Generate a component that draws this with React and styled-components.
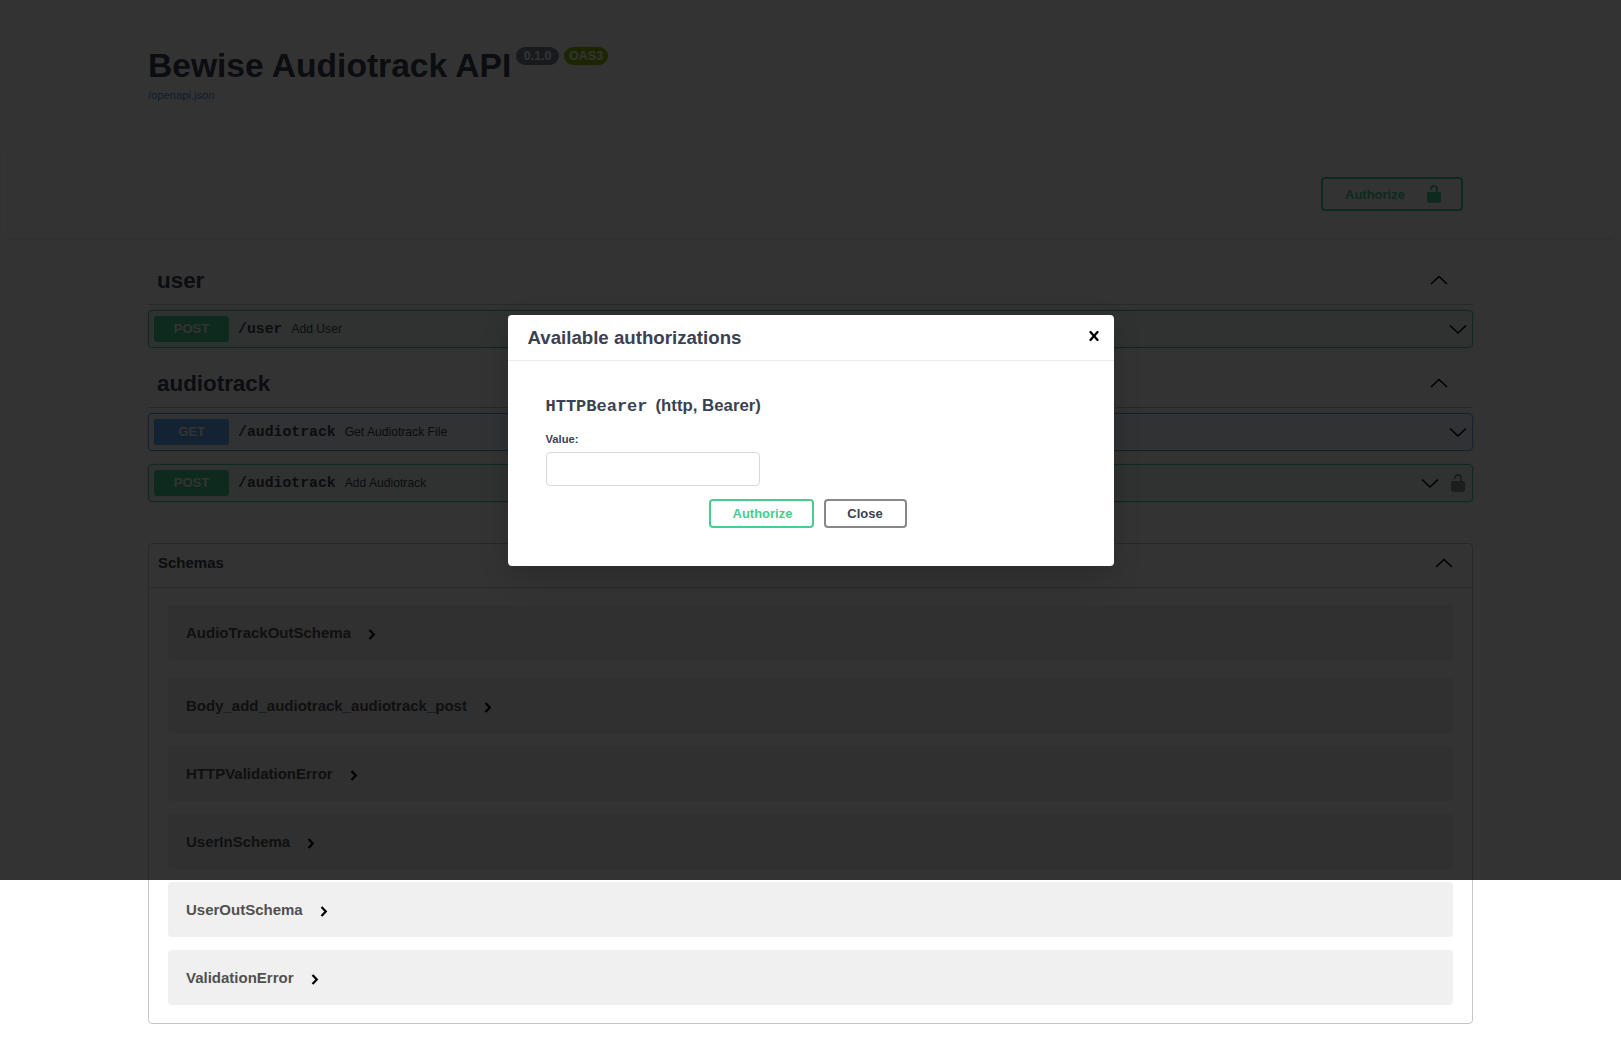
import React from 'react';
import styled, { createGlobalStyle } from 'styled-components';

const GlobalStyle = createGlobalStyle`
  body {
    margin: 0;
    background: #fff;
    font-family: "Liberation Sans", Arial, sans-serif;
    color: #3b4151;
  }
`;

const methodColors = {
  post: { main: '#49cc90', tint: 'rgba(73, 204, 144, 0.1)' },
  get: { main: '#61affe', tint: 'rgba(97, 175, 254, 0.1)' },
};

const Page = styled.div`
  position: relative;
  height: 1052px;
  overflow: hidden;
`;

const Info = styled.div`
  padding: 45px 148px 0;
  height: 147px;
  box-sizing: border-box;
`;

const TitleRow = styled.div`
  display: flex;
  align-items: flex-start;
`;

const Title = styled.h2`
  margin: 0;
  font-size: 33.6px;
  line-height: 41px;
  font-weight: 700;
`;

const Badge = styled.span`
  margin: 2px 0 0 5px;
  height: 18px;
  padding: 0 ${(p) => p.$pad}px;
  border-radius: 57px;
  background: ${(p) => p.$bg};
  color: #fff;
  font-size: 12.5px;
  font-weight: 700;
  line-height: 18px;
`;

const SpecLink = styled.a`
  display: block;
  margin-top: 2px;
  font-size: 11.2px;
  line-height: 14px;
  color: #4990e2;
`;

const SchemeBar = styled.div`
  display: flex;
  justify-content: flex-end;
  margin: 0 8px;
  padding: 30px 150px 27px 0;
  box-shadow: 0 1px 2px 0 rgba(0, 0, 0, 0.15);
`;

const AuthorizeButton = styled.button`
  display: flex;
  align-items: center;
  justify-content: space-between;
  box-sizing: border-box;
  width: 142px;
  height: 34px;
  padding: 0 17px 0 22px;
  background: transparent;
  border: 2px solid #49cc90;
  border-radius: 4px;
  color: #49cc90;
  font-family: inherit;
  font-size: 13px;
  font-weight: 700;
`;

const Content = styled.div`
  padding: 20px 148px 0;
`;

const Section = styled.section`
  margin-bottom: 13px;
`;

const TagHeader = styled.div`
  display: flex;
  align-items: center;
  justify-content: space-between;
  box-sizing: border-box;
  height: 47px;
  padding: 0 24px 1px 9px;
  margin-bottom: 5px;
  border-bottom: 1px solid rgba(59, 65, 81, 0.3);

  svg {
    margin-bottom: 2px;
  }
`;

const TagName = styled.h3`
  margin: 0;
  font-size: 22.4px;
  font-weight: 700;
`;

const Operation = styled.div`
  display: flex;
  align-items: center;
  box-sizing: border-box;
  height: 38px;
  margin-bottom: 13px;
  padding: 0 5px;
  background: ${(p) => methodColors[p.$method].tint};
  border: 1px solid ${(p) => methodColors[p.$method].main};
  border-radius: 4px;
  box-shadow: 0 0 3px rgba(0, 0, 0, 0.19);
  &:last-child {
    margin-bottom: 0;
  }
`;

const Method = styled.span`
  width: 75px;
  height: 26px;
  border-radius: 3px;
  background: ${(p) => methodColors[p.$method].main};
  color: #fff;
  font-size: 13px;
  font-weight: 700;
  line-height: 26px;
  text-align: center;
  text-shadow: 0 1px 0 rgba(0, 0, 0, 0.1);
`;

const Path = styled.span`
  margin-left: 9px;
  font-family: "Liberation Mono", monospace;
  font-size: 14.8px;
  font-weight: 700;
`;

const Summary = styled.span`
  flex: 1;
  margin-left: 9px;
  font-size: 12.13px;
`;

const RowIcons = styled.div`
  display: flex;
  align-items: center;
  gap: 8px;
  margin-right: -1px;
`;

const Schemas = styled.section`
  margin-top: 41px;
  border: 1px solid rgba(59, 65, 81, 0.3);
  border-radius: 4px;
`;

const SchemasHeader = styled.div`
  display: flex;
  align-items: center;
  justify-content: space-between;
  height: 37px;
  padding: 0 18px 6px 9px;
  border-bottom: 1px solid rgba(59, 65, 81, 0.3);
`;

const SchemasTitle = styled.h4`
  margin: 0;
  font-size: 15px;
  font-weight: 700;
`;

const ModelList = styled.div`
  display: flex;
  flex-direction: column;
  gap: 13px;
  padding: 17px 19px 18px;
`;

const Model = styled.div`
  display: flex;
  align-items: center;
  gap: 16px;
  box-sizing: border-box;
  height: 55px;
  margin-top: ${(p) => (p.$pushed ? 5 : 0)}px;
  padding: 0 18px;
  background: rgba(0, 0, 0, 0.06);
  border-radius: 4px;
  color: #505050;
  font-size: 15px;
  font-weight: 700;

  svg {
    margin-top: 2px;
  }
`;

const Overlay = styled.div`
  position: absolute;
  top: 0;
  left: 0;
  right: 0;
  height: 880px;
  background: rgba(0, 0, 0, 0.8);
`;

const Dialog = styled.div`
  box-sizing: border-box;
  width: 606px;
  height: 251px;
  margin: 315px auto 0;
  background: #fff;
  border-radius: 4px;
  box-shadow: 0 10px 30px -2px rgba(0, 0, 0, 0.2);
`;

const DialogHeader = styled.div`
  display: flex;
  align-items: center;
  justify-content: space-between;
  box-sizing: border-box;
  height: 46px;
  padding: 0 10px 0 20px;
  border-bottom: 1px solid #ebebeb;
`;

const DialogTitle = styled.h3`
  margin: 1px 0 0;
  font-size: 18.67px;
  font-weight: 700;
`;

const CloseIcon = styled.button`
  display: flex;
  padding: 0;
  margin-top: -3px;
  background: none;
  border: 0;
`;

const DialogBody = styled.div`
  padding: 35px 44px 0 38px;
`;

const SchemeName = styled.h4`
  margin: 0;
  font-size: 16.8px;
  line-height: 20px;
  font-weight: 700;
`;

const SchemeCode = styled.code`
  margin-right: 8px;
  font-family: "Liberation Mono", monospace;
  font-size: 17px;
  font-weight: 700;
`;

const FieldLabel = styled.label`
  display: block;
  margin-top: 15px;
  font-size: 11.2px;
  line-height: 14px;
  font-weight: 700;
`;

const ValueInput = styled.input`
  display: block;
  box-sizing: border-box;
  width: 214px;
  height: 34px;
  margin-top: 6px;
  background: #fff;
  border: 1px solid #d9d9d9;
  border-radius: 4px;
`;

const Actions = styled.div`
  display: flex;
  justify-content: center;
  gap: 10px;
  margin-top: 13px;
`;

const ModalButton = styled.button`
  box-sizing: border-box;
  width: ${(p) => p.$width}px;
  height: 29px;
  padding: 0 0 0 ${(p) => p.$inset}px;
  background: transparent;
  border: 2px solid ${(p) => p.$color};
  border-radius: 4px;
  color: ${(p) => p.$text};
  font-family: inherit;
  font-size: 13px;
  font-weight: 700;
`;

const Chevron = ({ up, size = 20 }) => (
  <svg width={size} height={size} viewBox="0 0 20 20" fill="none" stroke="#000" strokeWidth="1.6">
    <path d={up ? 'M2 14 L10 6.5 L18 14' : 'M2 6.5 L10 14 L18 6.5'} />
  </svg>
);

const SmallArrow = () => (
  <svg width="10" height="12" viewBox="0 0 10 12" fill="none" stroke="#000" strokeWidth="2.2">
    <path d="M2.5 2 L6.8 6.5 L2.5 11" />
  </svg>
);

const Lock = ({ color, opacity = 1 }) => (
  <svg width="20" height="20" viewBox="0 0 20 20" fill={color} opacity={opacity}>
    <path d="M15.8 8H14V5.6C14 2.703 12.665 1 10 1 7.334 1 6 2.703 6 5.6V6h2v-.801C8 3.754 8.797 3 10 3c1.203 0 2 .754 2 2.199V8H4c-.553 0-1 .646-1 1.199V17c0 .549.428 1.139.951 1.307l1.197.387C5.672 18.861 6.55 19 7.1 19h5.8c.549 0 1.428-.139 1.951-.307l1.196-.387c.524-.167.953-.757.953-1.306V9.199C17 8.646 16.352 8 15.8 8z" />
  </svg>
);

const CloseGlyph = () => (
  <svg width="20" height="20" viewBox="0 0 20 20" fill="#000">
    <path d="M14.348 14.849a1.2 1.2 0 0 1-1.697 0L10 11.819l-2.651 3.029a1.2 1.2 0 1 1-1.697-1.697l2.758-3.15-2.759-3.152a1.2 1.2 0 1 1 1.697-1.697L10 8.183l2.651-3.031a1.2 1.2 0 1 1 1.697 1.697l-2.758 3.152 2.758 3.15a1.2 1.2 0 0 1 0 1.698z" />
  </svg>
);

const OperationRow = ({ method, path, summary, locked }) => (
  <Operation $method={method}>
    <Method $method={method}>{method.toUpperCase()}</Method>
    <Path>{path}</Path>
    <Summary>{summary}</Summary>
    <RowIcons>
      <Chevron />
      {locked && <Lock color="#000" opacity={0.4} />}
    </RowIcons>
  </Operation>
);

const models = [
  { name: 'AudioTrackOutSchema' },
  { name: 'Body_add_audiotrack_audiotrack_post', pushed: true },
  { name: 'HTTPValidationError' },
  { name: 'UserInSchema' },
  { name: 'UserOutSchema' },
  { name: 'ValidationError' },
];

export default function App() {
  return (
    <Page>
      <GlobalStyle />
      <Info>
        <TitleRow>
          <Title>Bewise Audiotrack API</Title>
          <Badge $bg="#7d8492" $pad={7.5}>0.1.0</Badge>
          <Badge $bg="#89bf04" $pad={5}>OAS3</Badge>
        </TitleRow>
        <SpecLink>/openapi.json</SpecLink>
      </Info>
      <SchemeBar>
        <AuthorizeButton>
          Authorize
          <Lock color="#49cc90" />
        </AuthorizeButton>
      </SchemeBar>
      <Content>
        <Section>
          <TagHeader>
            <TagName>user</TagName>
            <Chevron up />
          </TagHeader>
          <OperationRow method="post" path="/user" summary="Add User" />
        </Section>
        <Section>
          <TagHeader>
            <TagName>audiotrack</TagName>
            <Chevron up />
          </TagHeader>
          <OperationRow method="get" path="/audiotrack" summary="Get Audiotrack File" />
          <OperationRow method="post" path="/audiotrack" summary="Add Audiotrack" locked />
        </Section>
        <Schemas>
          <SchemasHeader>
            <SchemasTitle>Schemas</SchemasTitle>
            <Chevron up />
          </SchemasHeader>
          <ModelList>
            {models.map((m) => (
              <Model key={m.name} $pushed={m.pushed}>
                {m.name}
                <SmallArrow />
              </Model>
            ))}
          </ModelList>
        </Schemas>
      </Content>
      <Overlay>
        <Dialog>
          <DialogHeader>
            <DialogTitle>Available authorizations</DialogTitle>
            <CloseIcon>
              <CloseGlyph />
            </CloseIcon>
          </DialogHeader>
          <DialogBody>
            <SchemeName>
              <SchemeCode>HTTPBearer</SchemeCode>(http, Bearer)
            </SchemeName>
            <FieldLabel>Value:</FieldLabel>
            <ValueInput />
            <Actions>
              <ModalButton $width={105} $inset={3} $color="#49cc90" $text="#49cc90">Authorize</ModalButton>
              <ModalButton $width={83} $inset={0} $color="#888" $text="#3b4151">Close</ModalButton>
            </Actions>
          </DialogBody>
        </Dialog>
      </Overlay>
    </Page>
  );
}
